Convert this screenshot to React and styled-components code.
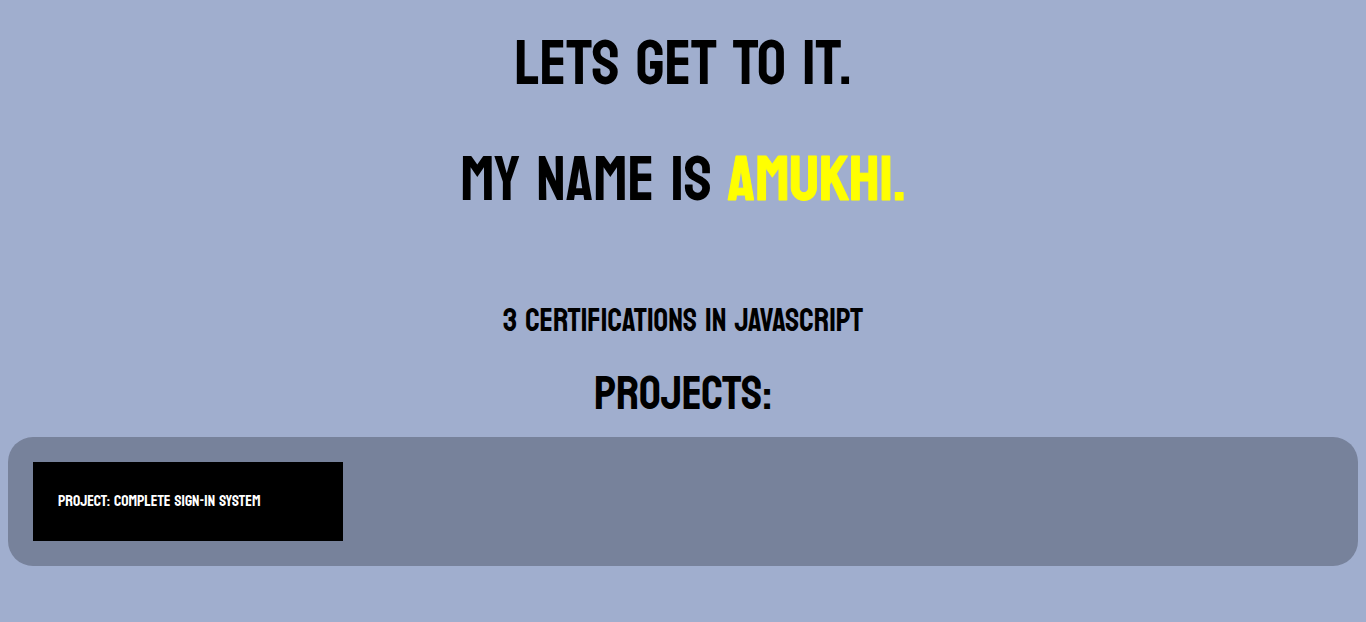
import React, { Fragment } from "react";
import styled, { createGlobalStyle } from "styled-components";

const GlobalStyle = createGlobalStyle`
  body {
    margin: 8px;
    background: #a0aece;
    color: #000;
    font-family: "Staatliches", "Open Sans Condensed", "Liberation Sans", sans-serif;
    font-weight: 400;
  }
`;

const Intro = styled.header`
  display: flex;
  flex-direction: column;
  align-items: center;
  gap: 36px;
  padding-top: 15px;
  text-align: center;
`;

const Title = styled.h1`
  margin: 0;
  font-size: 64px;
  font-weight: 400;
  line-height: 80px;
`;

const Name = styled.strong`
  color: #ff0;
  font-weight: 400;
  -webkit-text-stroke: 1px #ff0;
`;

const Certifications = styled.p`
  margin: 82px 0 0;
  font-size: 32px;
  line-height: 40px;
  text-align: center;
`;

const SectionTitle = styled.h2`
  margin: 22px 0 14px;
  font-size: 48px;
  font-weight: 400;
  line-height: 60px;
  text-align: center;
`;

const Panel = styled.section`
  display: flex;
  flex-wrap: wrap;
  gap: 25px;
  padding: 25px;
  border-radius: 25px;
  background: #77829b;
`;

const Card = styled.article`
  box-sizing: border-box;
  width: 310px;
  max-width: 100%;
  padding: 25px;
  background: #000;
  color: #fff;
`;

const CardTitle = styled.h3`
  margin: 0;
  font-size: 16px;
  font-weight: 400;
  line-height: 29px;
`;

const SerifSpace = styled.span`
  font-family: "Liberation Serif", serif;
  line-height: 1;
`;

// The display face has very tight word spaces, so the spaces are set in serif.
function Words({ children }) {
  return children.split(" ").map((word, i) => (
    <Fragment key={i}>
      {i > 0 && <SerifSpace> </SerifSpace>}
      {word}
    </Fragment>
  ));
}

export default function App() {
  return (
    <main>
      <GlobalStyle />
      <Intro>
        <Title>
          <Words>LETS GET TO IT.</Words>
        </Title>
        <Title>
          <Words>MY NAME IS </Words>
          <Name>AMUKHI.</Name>
        </Title>
      </Intro>
      <Certifications>
        <Words>3 CERTIFICATIONS IN JAVASCRIPT</Words>
      </Certifications>
      <SectionTitle>PROJECTS:</SectionTitle>
      <Panel>
        <Card>
          <CardTitle>
            <Words>PROJECT: COMPLETE SIGN-IN SYSTEM</Words>
          </CardTitle>
        </Card>
      </Panel>
    </main>
  );
}
